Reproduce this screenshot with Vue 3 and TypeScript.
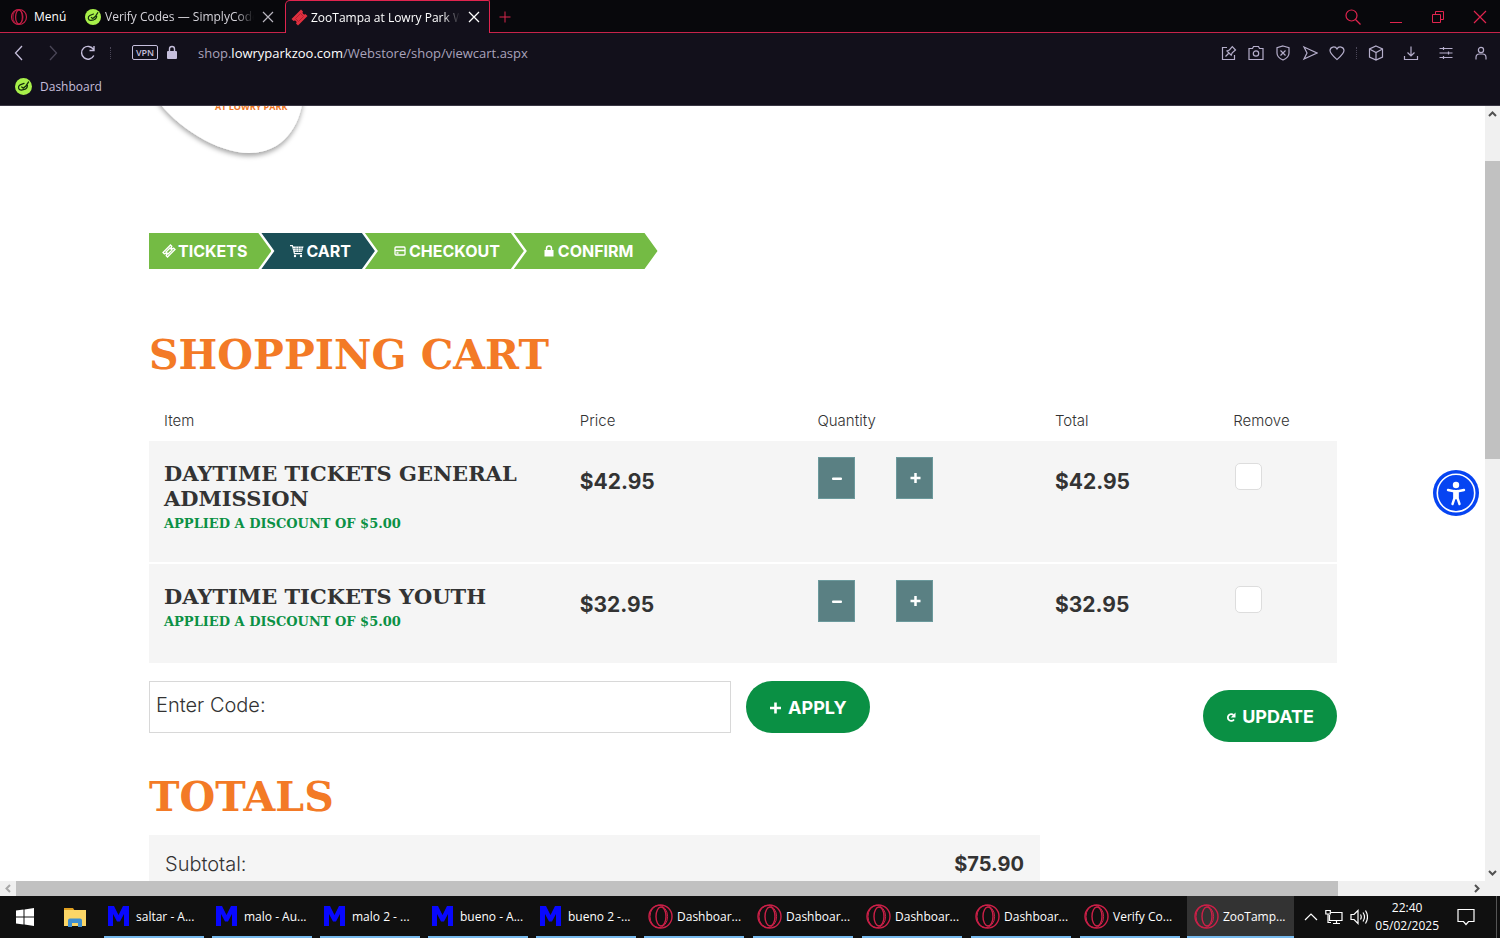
<script setup lang="ts">
import { ref } from 'vue'

interface CartItem {
  name: string
  discount: string
  price: string
  total: string
  quantity: string
  remove: boolean
}

interface Task {
  label: string
  kind: 'm' | 'opera'
  active?: boolean
}

const items = ref<CartItem[]>([
  { name: 'DAYTIME TICKETS GENERAL ADMISSION', discount: 'APPLIED A DISCOUNT OF $5.00', price: '$42.95', total: '$42.95', quantity: '', remove: false },
  { name: 'DAYTIME TICKETS YOUTH', discount: 'APPLIED A DISCOUNT OF $5.00', price: '$32.95', total: '$32.95', quantity: '', remove: false },
])

const tasks: Task[] = [
  { label: 'saltar - A...', kind: 'm' },
  { label: 'malo - Au...', kind: 'm' },
  { label: 'malo 2 - ...', kind: 'm' },
  { label: 'bueno - A...', kind: 'm' },
  { label: 'bueno 2 -...', kind: 'm' },
  { label: 'Dashboar...', kind: 'opera' },
  { label: 'Dashboar...', kind: 'opera' },
  { label: 'Dashboar...', kind: 'opera' },
  { label: 'Dashboar...', kind: 'opera' },
  { label: 'Verify Co...', kind: 'opera' },
  { label: 'ZooTamp...', kind: 'opera', active: true },
]

const code = ref('')
</script>

<template>
  <div class="screen">
    <header class="browser">
      <div class="tabs">
        <button class="menu" type="button">
          <svg width="18" height="18" viewBox="0 0 18 18" fill="none" stroke="#c81e46"><circle cx="9" cy="9" r="7.5" stroke-width="1.2" /><ellipse cx="9" cy="9" rx="3.4" ry="7" stroke-width="1.2" /><ellipse cx="8" cy="9" rx="5" ry="7.3" stroke-width="0.8" /></svg>
          <span>Menú</span>
        </button>
        <button class="tab" type="button">
          <svg width="16" height="16" viewBox="0 0 16 16"><circle cx="8" cy="8" r="8" fill="#a8f04a" /><g fill="none" stroke="#15300c" stroke-width="1.2" stroke-linecap="round"><path d="M8.500 5 4.800 6.500C2.300 8 3 11.500 6 11.300l2.800-.5c2-.6 2.800-2 2.900-3.800" /><path d="M6.300 8.500l1.500 1 2.500-2 2.500-3.800" /></g></svg>
          <span class="tab-title">Verify Codes — SimplyCodes</span>
        </button>
        <button class="close-tab" type="button" aria-label="Close tab"><svg width="12" height="12" viewBox="0 0 12 12" stroke="#b9b6bf" stroke-width="1.2"><path d="M1 1l10 10M11 1L1 11" /></svg></button>
        <div class="active-tab">
          <button class="tab" type="button">
            <svg width="17" height="17" viewBox="0 0 17 17"><path d="M10 .5 12 2.500a1.700 1.700 0 0 0 2.400 2.400L16.500 7 7 16.500 5 14.500A1.700 1.700 0 0 0 2.500 12L.5 10z" fill="#e0303f" /><path d="M9.500 4.500l3 3-5 5-3-3z" fill="none" stroke="#a81c2c" stroke-width=".8" /></svg>
            <span class="tab-title">ZooTampa at Lowry Park Webstore</span>
          </button>
          <button class="close-tab" type="button" aria-label="Close tab"><svg width="12" height="12" viewBox="0 0 12 12" stroke="#fff" stroke-width="1.300"><path d="M1 1l10 10M11 1L1 11" /></svg></button>
        </div>
        <button class="new-tab" type="button" aria-label="New tab"><svg width="12" height="12" viewBox="0 0 12 12" stroke="#d8264c"><path d="M6 .5v11M.5 6h11" /></svg></button>
        <div class="window-controls">
          <button type="button" aria-label="Search tabs"><svg width="16" height="16" viewBox="0 0 16 16" fill="none" stroke="#e0244e" stroke-width="1.2"><circle cx="6.500" cy="6.500" r="5.500" /><path d="M10.500 10.500l5 5" /></svg></button>
          <button type="button" aria-label="Minimize"><svg width="14" height="14" viewBox="0 0 14 14" stroke="#e0244e"><path d="M1 12.500h12" /></svg></button>
          <button type="button" aria-label="Restore"><svg width="14" height="14" viewBox="0 0 14 14" fill="none" stroke="#e0244e"><path d="M1.500 4.500h8v8h-8zM4.500 4.500v-3h8v8h-3" /></svg></button>
          <button type="button" aria-label="Close"><svg width="14" height="14" viewBox="0 0 14 14" stroke="#e0244e" stroke-width="1.2"><path d="M1 1l12 12M13 1L1 13" /></svg></button>
        </div>
      </div>

      <div class="toolbar">
        <button class="back" type="button" aria-label="Back"><svg width="10" height="16" viewBox="0 0 10 16" fill="none" stroke="#c6bfdc" stroke-width="1.300"><path d="M8 1L1.500 8 8 15" /></svg></button>
        <button class="forward" type="button" aria-label="Forward"><svg width="10" height="16" viewBox="0 0 10 16" fill="none" stroke="#4a4657" stroke-width="1.300"><path d="M2 1l6.500 7L2 15" /></svg></button>
        <button class="reload" type="button" aria-label="Reload"><svg width="16" height="16" viewBox="0 0 16 16" fill="none" stroke="#c6bfdc" stroke-width="1.400"><path d="M13.800 10.500A6.400 6.400 0 1 1 13.500 4.500M14 1v4.500H9.500" /></svg></button>
        <span class="dots"></span>
        <span class="vpn">VPN</span>
        <svg class="lock" width="12" height="15" viewBox="0 0 12 15"><rect x="1" y="6" width="10" height="8" rx="1" fill="#c6bfdc" /><path d="M3.500 6V4a2.500 2.500 0 0 1 5 0v2" fill="none" stroke="#c6bfdc" stroke-width="1.400" /></svg>
        <button class="address" type="button" aria-label="Address">shop.<b>lowryparkzoo.com</b>/Webstore/shop/viewcart.aspx</button>
        <div class="tools">
          <button type="button" aria-label="Edit page"><svg viewBox="0 0 16 16"><path d="M6 2.500H1.500v12h12V10M4.500 11.500l3-3M6 6l4.200 4.200 1-2.400 3.300-2.800-3.200-3.300-2.900 3.300z" /></svg></button>
          <button type="button" aria-label="Snapshot"><svg viewBox="0 0 16 16"><path d="M1 3.500h3.500l1-2h5l1 2H15v11H1z" /><circle cx="8" cy="8.500" r="2.700" /></svg></button>
          <button type="button" aria-label="Ad blocker"><svg viewBox="0 0 16 16"><path d="M8 1l6 1.800V8c0 3.500-2.500 5.500-6 7-3.500-1.500-6-3.500-6-7V2.800zM5.500 5.500l5 5M10.500 5.500l-5 5" /></svg></button>
          <button type="button" aria-label="Send"><svg viewBox="0 0 16 16"><path d="M2 2l13 6-13 6 3-6z" /></svg></button>
          <button type="button" aria-label="Bookmark"><svg viewBox="0 0 16 16"><path d="M8 14.500C4 11 1 8.500 1 5.500a3.700 3.700 0 0 1 7-1.500 3.700 3.700 0 0 1 7 1.500c0 3-3 5.500-7 9z" /></svg></button>
          <span class="dots"></span>
          <button type="button" aria-label="Extensions"><svg viewBox="0 0 16 16"><path d="M8 1l6.500 3v8L8 15l-6.500-3V4zM1.500 4L8 7.500 14.500 4M8 7.500V15" /></svg></button>
          <button type="button" aria-label="Downloads"><svg viewBox="0 0 16 16"><path d="M8 1.500v9M4.500 7.500L8 11l3.500-3.500M1.500 11v3.500h13V11" /></svg></button>
          <button type="button" aria-label="Easy setup"><svg viewBox="0 0 16 16"><path d="M1.500 3.500h13M1.500 8h13M1.500 12.500h13M5.500 2v3M10.500 6.500v3M5.500 11v3" /></svg></button>
          <button type="button" aria-label="Profile"><svg viewBox="0 0 16 16"><circle cx="8" cy="5" r="2.600" /><path d="M3 14.500v-2c0-2 1.500-3.500 3.500-3.500h3c2 0 3.500 1.500 3.500 3.500v2" /></svg></button>
        </div>
      </div>

      <nav class="bookmarks" aria-label="Bookmarks">
        <a href="#">
          <svg width="17" height="17" viewBox="0 0 16 16"><circle cx="8" cy="8" r="8" fill="#a8f04a" /><g fill="none" stroke="#15300c" stroke-width="1.2" stroke-linecap="round"><path d="M8.500 5 4.800 6.500C2.300 8 3 11.500 6 11.300l2.800-.5c2-.6 2.800-2 2.900-3.800" /><path d="M6.300 8.500l1.500 1 2.500-2 2.500-3.800" /></g></svg>
          Dashboard
        </a>
      </nav>
    </header>

    <div class="viewport">
      <main class="page">
        <svg class="logo" width="170" height="60" viewBox="0 0 170 60" role="img" aria-label="ZooTampa at Lowry Park">
          <defs><filter id="soft" x="-20%" y="-20%" width="140%" height="150%"><feDropShadow dx="0" dy="3" stdDeviation="2.500" flood-color="#000" flood-opacity="0.35" /></filter></defs>
          <path d="M7 -8C26 20 68 47 100 47 134 47 151 20 154 -8Z" fill="#fff" filter="url(#soft)" />
          <text x="66" y="4" font-size="9">AT LOWRY PARK</text>
        </svg>

        <ol class="steps">
          <li class="step first">
            <svg width="14" height="14" viewBox="0 0 14 14" fill="none" stroke="#fff" stroke-width="1.300"><path d="M8.500 1l1.300 1.300a1.300 1.300 0 0 0 1.900 1.900L13 5.500 5.500 13l-1.300-1.300a1.300 1.300 0 0 0-1.900-1.900L1 8.500zM8 4l2 2-4 4-2-2z" /></svg>TICKETS
          </li>
          <li class="step current" aria-current="step">
            <svg width="14" height="14" viewBox="0 0 14 14" fill="#fff"><path d="M0 1h2.800l.5 1.500H13.500L12 8H4.700l.2 1H12v1.200H4L2 2.200H0z" /><circle cx="5" cy="12" r="1.200" /><circle cx="11" cy="12" r="1.200" /><path d="M3 4.500h10M3.500 6.300h9M6 2.500v5.500M8.500 2.500v5.500M11 2.500v5.500" stroke="#1b4f57" stroke-width=".4" /></svg>CART
          </li>
          <li class="step">
            <svg width="13" height="14" viewBox="0 0 13 14" fill="none" stroke="#fff" stroke-width="1.300"><rect x="1" y="3" width="10" height="8" rx="1" /><path d="M1 6.500h10M2.500 9h2" /></svg>CHECKOUT
          </li>
          <li class="step">
            <svg width="13" height="14" viewBox="0 0 13 14"><rect x="1.500" y="6" width="9" height="6.500" fill="#fff" /><path d="M3.500 6V4.500a2.500 2.500 0 0 1 5 0V6" fill="none" stroke="#fff" stroke-width="1.500" /></svg>CONFIRM
          </li>
        </ol>

        <h1>SHOPPING CART</h1>

        <table class="cart">
          <colgroup><col class="c35" /><col class="c20" /><col class="c20" /><col class="c15" /><col class="c10" /></colgroup>
          <thead>
            <tr><th scope="col">Item</th><th scope="col">Price</th><th scope="col">Quantity</th><th scope="col">Total</th><th scope="col">Remove</th></tr>
          </thead>
          <tbody>
            <tr v-for="(item, i) in items" :key="item.name">
              <td class="item"><h2>{{ item.name }}</h2><p>{{ item.discount }}</p></td>
              <td class="money">{{ item.price }}</td>
              <td class="qty">
                <div class="stepper">
                  <button type="button" aria-label="Decrease quantity"><svg width="12" height="12" viewBox="0 0 12 12"><rect x="1" y="5.500" width="10" height="2.500" rx="1" fill="#fff" /></svg></button>
                  <input v-model="item.quantity" type="text" :aria-label="`Quantity, ${item.name}`" />
                  <button type="button" aria-label="Increase quantity"><svg width="12" height="12" viewBox="0 0 12 12"><path d="M6.500 1v10M1.500 6h10" stroke="#fff" stroke-width="2.500" /></svg></button>
                </div>
              </td>
              <td class="money">{{ item.total }}</td>
              <td class="remove"><input :id="`remove-${i}`" v-model="item.remove" type="checkbox" :aria-label="`Remove ${item.name}`" /></td>
            </tr>
          </tbody>
        </table>

        <form class="actions" @submit.prevent>
          <input v-model="code" class="code" type="text" placeholder="Enter Code:" aria-label="Enter Code" />
          <button class="pill" type="submit"><svg width="13" height="14" viewBox="0 0 13 14"><path d="M6.500 2.500v11M1 8h11" stroke="#fff" stroke-width="2.600" /></svg>APPLY</button>
          <button class="pill update" type="button"><svg width="10" height="12" viewBox="0 0 10 12"><path d="M8 9.500A3.400 3.400 0 1 1 7.500 4.900" fill="none" stroke="#fff" stroke-width="1.800" /><path d="M9.500 2.500v5H4.700z" fill="#fff" /></svg>UPDATE</button>
        </form>

        <h1 class="totals-title">TOTALS</h1>
        <dl class="totals"><dt>Subtotal:</dt><dd>$75.90</dd></dl>

        <button class="access" type="button" aria-label="Accessibility">
          <svg width="46" height="46" viewBox="0 0 46 46"><circle cx="23" cy="23" r="23" fill="#0644f2" /><circle cx="23" cy="23" r="18.700" fill="none" stroke="#fff" stroke-width="1.600" /><circle cx="23" cy="15" r="3.200" fill="#fff" /><path d="M15 20l6 1.200h4L31 20M21.500 21v7L19.500 34M24.500 21v7l2 6M22 28h2" fill="none" stroke="#fff" stroke-width="2.400" stroke-linecap="round" /><rect x="20.500" y="20.500" width="5" height="8" fill="#fff" /></svg>
        </button>
      </main>
      <div class="vbar">
        <svg width="9" height="6" viewBox="0 0 9 6"><path d="M1 5l3.500-3.500L8 5" /></svg>
        <span class="vtrack"><span class="vthumb"></span></span>
        <svg width="9" height="6" viewBox="0 0 9 6"><path d="M1 1l3.500 3.500L8 1" /></svg>
      </div>
    </div>
    <div class="hbar">
      <svg class="muted" width="6" height="9" viewBox="0 0 6 9"><path d="M5 1L1.500 4.500 5 8" /></svg>
      <span class="htrack"><span class="hthumb"></span></span>
      <svg width="6" height="9" viewBox="0 0 6 9"><path d="M1 1l3.500 3.500L1 8" /></svg>
    </div>

    <footer class="taskbar">
      <button class="start" type="button" aria-label="Start"><svg width="18" height="18" viewBox="0 0 18 18" fill="#fff"><path d="M0 2.500l7.500-1V8.500H0zM8.500 1.400L18 0v8.500H8.500zM0 9.500h7.500v7L0 15.500zM8.500 9.500H18V18l-9.500-1.400z" /></svg></button>
      <button class="explorer" type="button" aria-label="File Explorer"><svg width="22" height="19" viewBox="0 0 22 19"><path d="M0 0h9l2 3h-11z" fill="#e0a020" /><rect y="2" width="22" height="16" fill="#fbd667" /><path d="M4 19v-6.500a2 2 0 0 1 2-2h10a2 2 0 0 1 2 2V19h-4v-4H8v4z" fill="#3f8fd0" /></svg></button>
      <div class="tasks">
        <button v-for="(task, i) in tasks" :key="i" type="button" class="task" :class="[task.kind, { active: task.active }]">
          <svg v-if="task.kind === 'm'" width="21" height="20" viewBox="0 0 21 20"><path d="M0 20V0h6l4.500 9L15 0h6v20h-5V8l-4 7.500H9L5 8v12z" fill="#0808ff" /></svg>
          <svg v-else width="25" height="25" viewBox="0 0 25 25" fill="none" stroke="#cc2048"><circle cx="12.500" cy="12.500" r="11.500" stroke-width="1.400" /><ellipse cx="10.800" cy="12.500" rx="8.800" ry="11.200" stroke-width="1" /><ellipse cx="13" cy="12.500" rx="5" ry="9.500" stroke-width="1.400" /></svg>
          <span>{{ task.label }}</span>
        </button>
      </div>
      <div class="tray">
        <button type="button" aria-label="Show hidden icons"><svg width="14" height="8" viewBox="0 0 14 8"><path d="M1 7l6-6 6 6" /></svg></button>
        <button type="button" aria-label="Network"><svg width="18" height="16" viewBox="0 0 18 16"><path d="M6 3.500h11v8H4.500V6M.8 1.500h4.500V5H.8zM3 5v8.500h3M8 14.500h7M11.500 11.500v3" /></svg></button>
        <button type="button" aria-label="Volume"><svg width="18" height="16" viewBox="0 0 18 16"><path d="M1 5.500h3l4-4v13l-4-4H1zM10.500 5.500q1.500 2.500 0 5M13 3.500q3 4.500 0 9M15.500 1.500q4 6.500 0 13" /></svg></button>
        <div class="clock"><span>22:40</span><span>05/02/2025</span></div>
        <button class="notice" type="button" aria-label="Notifications"><svg width="18" height="18" viewBox="0 0 18 18"><path d="M1 1.500h16v12h-5.500L9 16.500l-2.500-3H1z" /></svg></button>
      </div>
    </footer>
  </div>
</template>

<style>
body { margin: 0; overflow: hidden; }
</style>

<style scoped>
* { box-sizing: border-box; }
.screen { display: flex; flex-direction: column; height: 100vh; font-family: "Open Sans", "Noto Sans", sans-serif; font-size: 12px; }
button { margin: 0; padding: 0; border: 0; background: none; color: inherit; font: inherit; display: flex; align-items: center; }
svg { display: block; flex: none; }

.browser { background: #12101b; color: #c6bfdc; flex: none; border-bottom: 1px solid #3a3744; height: 106px; }
.tabs { display: flex; height: 33px; background: #08080c; align-items: stretch; box-shadow: inset 0 -1px #c6234a; }
.menu { width: 75px; padding-left: 10px; gap: 6px; color: #fff; flex: none; }
.tab { gap: 4px; min-width: 0; flex: 1; color: #d5d3da; }
.tabs > .tab { flex: none; width: 179px; padding-left: 10px; }
.tab-title { flex: 1; text-align: left; white-space: nowrap; overflow: hidden; mask-image: linear-gradient(to right, #000 88%, transparent); }
.close-tab { padding: 0 8px; flex: none; }
.active-tab { display: flex; width: 205px; margin-left: 3px; padding-left: 5px; background: #12101b; border: 1px solid #e0244e; border-bottom: 0; border-radius: 5px 2px 0 0; }
.active-tab .tab { color: #fff; gap: 3px; }
.active-tab .close-tab { padding-right: 9px; }
.new-tab { padding-left: 9px; }
.window-controls { margin-left: auto; display: flex; gap: 28px; padding-right: 13px; }

.toolbar { display: flex; align-items: center; height: 39px; padding: 0 11px 0 14px; }
.back { width: 34px; }
.forward { width: 32px; }
.reload { width: 30px; }
.dots { width: 1px; height: 12px; border-left: 1px dotted #4a4657; }
.vpn { margin-left: 21px; width: 26px; height: 15px; border: 1px solid #c6bfdc; border-radius: 2px; font-size: 9px; line-height: 13px; text-align: center; font-weight: 600; }
.lock { margin-left: 8px; }
.address { margin-left: 20px; font-size: 13px; color: #a9a3bb; }
.address b { font-weight: 400; color: #fff; }
.tools { margin-left: auto; display: flex; align-items: center; gap: 11px; }
.tools svg { width: 16px; height: 16px; fill: none; stroke: #b5aecb; stroke-width: 1.2; }
.tools .dots ~ button { margin-left: 8px; }
.tools .dots + button { margin-left: 0; }
.bookmarks { padding: 6px 0 0 15px; }
.bookmarks a { display: inline-flex; align-items: center; gap: 8px; color: #c6bfdc; text-decoration: none; }

.viewport { display: flex; flex: 1; min-height: 0; }
.page { position: relative; flex: 1; min-width: 0; overflow: hidden; padding: 0 148px 0 149px; background: #fff; color: #333; font-family: Inter, "Open Sans", sans-serif; }
.logo text { font-family: "Open Sans", sans-serif; font-weight: 700; fill: #ee7623; }
.steps { display: flex; list-style: none; margin: 67px 0 0; padding: 0; }
.step { display: flex; align-items: center; gap: 2px; height: 36px; margin-left: -10px; padding: 0 24px 0 29px; background: #74bb44; color: #fff; font-size: 16px; font-weight: 700; clip-path: polygon(0 0, calc(100% - 13px) 0, 100% 50%, calc(100% - 13px) 100%, 0 100%, 13px 50%); }
.step.first { margin-left: 0; padding-left: 13px; clip-path: polygon(0 0, calc(100% - 13px) 0, 100% 50%, calc(100% - 13px) 100%, 0 100%); }
.step.current { background: #1b4f57; }

h1 { margin: 65px 0 0; font: 700 41px/42px "DejaVu Serif", serif; color: #f37a26; white-space: nowrap; }
.cart { width: 100%; margin-top: 23px; border-collapse: collapse; table-layout: fixed; }
.c35 { width: 35%; }
.c20 { width: 20%; }
.c15 { width: 15%; }
.c10 { width: 10%; }
th { height: 42px; padding: 0 15px; text-align: left; font-size: 15px; font-weight: 300; }
td { padding: 0 16px; vertical-align: top; background: #f5f5f5; background-clip: padding-box; }
tbody tr + tr td { border-top: 2px solid #fff; }
.item { padding: 20px 15px 28px; }
tr:last-child .item { padding-bottom: 31px; }
.item h2 { margin: 0; font: 700 21px/25px "DejaVu Serif", serif; }
.item p { margin: 3px 0 0; font: 700 13px/20px "DejaVu Serif", serif; color: #0b9145; white-space: nowrap; }
.money { padding: 27px 15px 0; font-size: 21px; line-height: 28px; font-weight: 700; }
.qty { padding-top: 16px; }
.stepper { display: flex; }
.stepper button { width: 37px; height: 42px; justify-content: center; background: #5a8083; border: 1px solid #6b999c; }
.stepper input { width: 41px; height: 42px; border: 0; padding: 0; background: transparent; text-align: center; font: inherit; }
.remove { padding-top: 22px; }
.remove input { display: block; appearance: none; width: 27px; height: 27px; margin: 0 0 0 1px; border: 1px solid #ddd; border-radius: 5px; background: #fff; }

.actions { display: flex; align-items: flex-start; margin-top: 18px; }
.code { width: 49%; height: 52px; padding: 0 6px 4px; border: 1px solid #d8d8d8; font: 300 20px Inter, sans-serif; color: #333; }
.code::placeholder { color: #333; opacity: 1; }
.pill { justify-content: center; gap: 6px; height: 52px; margin-left: 15px; padding: 0 23px; border-radius: 26px; background: #0a9044; color: #fff; font-size: 18px; font-weight: 700; }
.update { margin: 9px 0 0 auto; }
.totals-title { margin-top: 34px; }
.totals { display: flex; justify-content: space-between; align-items: center; width: 75%; height: 58px; margin: 17px 0 0; padding: 0 16px; background: #f5f5f5; font-size: 20px; font-weight: 300; }
.totals dd { margin: 0; font-weight: 700; }
.access { position: absolute; right: 6px; top: 364px; }

.vbar { display: flex; flex-direction: column; align-items: center; width: 15px; padding: 5px 0; background: #f0f0f0; }
.vbar svg, .hbar svg { fill: none; stroke: #505050; stroke-width: 2; }
.vtrack { flex: 1; width: 100%; padding-top: 44px; }
.vthumb { display: block; height: 42%; background: #c1c1c1; }
.hbar { display: flex; align-items: center; height: 15px; flex: none; padding: 0 20px 0 5px; background: #f0f0f0; }
.hbar .muted { stroke: #a8a8a8; }
.htrack { flex: 1; height: 100%; padding: 0 5px; }
.hthumb { display: block; height: 100%; width: 91%; background: #c1c1c1; }

.taskbar { display: flex; align-items: stretch; height: 42px; flex: none; background: #101010; color: #fff; }
.start { width: 50px; justify-content: center; }
.explorer { width: 50px; justify-content: center; }
.tasks { display: flex; padding-left: 4px; }
.task { width: 100px; margin-right: 8px; padding-left: 4px; gap: 7px; border-bottom: 2px solid #76b9ed; white-space: nowrap; }
.task.opera { margin-right: 9px; padding-left: 4px; gap: 4px; }
.task.active { width: 107px; padding-left: 7px; margin: 0 0 0 -2px; background: #333; }
.tray { display: flex; align-items: center; margin-left: auto; padding-right: 3px; }
.tray button { margin-right: 7px; }
.tray svg { fill: none; stroke: #fff; stroke-width: 1.2; }
.clock { display: flex; flex-direction: column; align-items: center; line-height: 18px; }
.tray .notice { align-self: stretch; margin: 0; padding: 0 21px 0 18px; border-right: 1px solid #555; }
</style>
